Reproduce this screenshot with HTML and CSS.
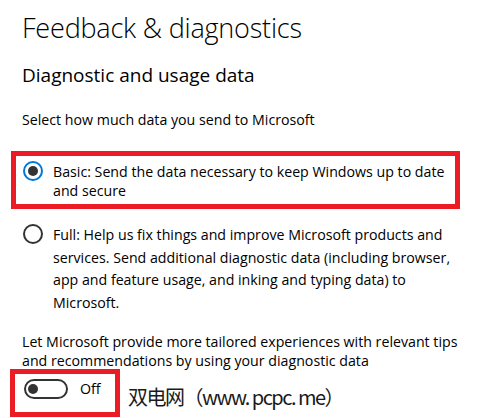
FILE: index.html
```html
<!DOCTYPE html>
<html lang="en">
<head>
<meta charset="utf-8">
<title>Feedback &amp; diagnostics</title>
<link rel="stylesheet" href="styles.css">
</head>
<body>
<main class="page">
  <h1 class="title">Feedback &amp; diagnostics</h1>
  <h2 class="subtitle">Diagnostic and usage data</h2>
  <p class="lead">Select how much data you send to Microsoft</p>
  <div class="options">
    <label class="option option--marked">
      <span class="radio radio--on"></span>
      <span class="option-text">Basic: Send the data necessary to keep Windows up to date<br>and secure</span>
    </label>
    <label class="option option--full">
      <span class="radio"></span>
      <span class="option-text">Full: Help us fix things and improve Microsoft products and<br>services. Send additional diagnostic data (including browser,<br>app and feature usage, and inking and typing data) to<br>Microsoft.</span>
    </label>
  </div>
  <p class="lead lead--second">Let Microsoft provide more tailored experiences with relevant tips<br>and recommendations by using your diagnostic data</p>
  <div class="toggle-row">
    <div class="toggle-field">
      <span class="toggle"><span class="knob"></span></span>
      <span class="toggle-label">Off</span>
    </div>
    <span class="watermark">双电网（www. pcpc. me）</span>
  </div>
</main>
</body>
</html>
```

FILE: styles.css
```css
html, body {
  margin: 0;
  padding: 0;
  background: #ffffff;
}

body {
  font-family: "Open Sans", "Noto Sans", sans-serif;
  color: #000000;
  width: 500px;
  height: 418px;
  overflow: hidden;
}

.page {
  padding: 8px 0 0 22px;
  width: 470px;
}

.title {
  margin: 0;
  font-size: 27px;
  font-weight: 300;
  line-height: 40px;
  letter-spacing: -0.2px;
}

.subtitle {
  margin: 14px 0 0;
  font-size: 19px;
  font-weight: 400;
  line-height: 26px;
  letter-spacing: 0;
}

.lead {
  margin: 22px 0 0;
  font-size: 14.2px;
  line-height: 20px;
  white-space: nowrap;
}

.options {
  margin-top: 26px;
  display: flex;
  flex-direction: column;
  gap: 20px;
}

.option {
  display: flex;
  align-items: flex-start;
  gap: 10px;
  font-size: 14.2px;
  line-height: 19px;
  white-space: nowrap;
}

.option--marked {
  margin-left: -6px;
  padding: 6px 0 4px 7px;
  outline: 5px solid #ec1c24;
  width: 439px;
  box-sizing: border-box;
}

.option--marked .radio {
  margin-top: -1px;
}

.option--full {
  margin-left: 1px;
  line-height: 22.5px;
}

.radio {
  flex: 0 0 auto;
  margin-top: 0;
  width: 20px;
  height: 20px;
  box-sizing: border-box;
  border: 2px solid #333333;
  border-radius: 50%;
  display: flex;
  align-items: center;
  justify-content: center;
}

.radio--on {
  border-color: #0078d7;
}

.radio--on::after {
  content: "";
  width: 10px;
  height: 10px;
  border-radius: 50%;
  background: #333333;
}

.lead--second {
  margin-top: 18px;
  line-height: 19px;
}

.toggle-row {
  margin-top: 3.5px;
  display: flex;
  align-items: flex-start;
  gap: 13px;
}

.toggle-field {
  margin-left: -7px;
  width: 100px;
  height: 38px;
  box-sizing: border-box;
  outline: 5px solid #ec1c24;
  padding: 5px 0 0 9px;
  display: flex;
  align-items: flex-start;
  gap: 12px;
}

.toggle {
  width: 44px;
  height: 20px;
  box-sizing: border-box;
  border: 2px solid #333333;
  border-radius: 10px;
  display: flex;
  align-items: center;
  padding-left: 2px;
}

.knob {
  width: 10px;
  height: 10px;
  border-radius: 50%;
  background: #333333;
}

.toggle-label {
  font-size: 14.2px;
  line-height: 20px;
}

.watermark {
  font-family: "Noto Sans CJK SC", sans-serif;
  font-size: 20px;
  line-height: 24px;
  color: #1a1a1a;
  letter-spacing: -1.5px;
  margin-top: 11px;
}
```
